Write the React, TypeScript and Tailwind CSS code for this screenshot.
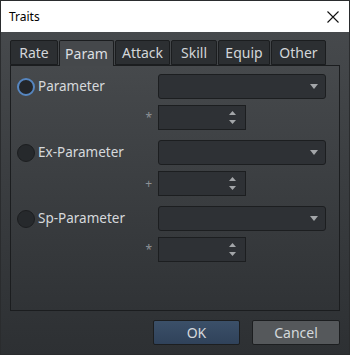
import React from 'react'

// =============================================
// Kleine Bausteine
// =============================================

const TABS = [
  { label: 'Rate', w: 'w-[48px]' },
  { label: 'Param', w: 'w-[55px]', active: true },
  { label: 'Attack', w: 'w-[55px]' },
  { label: 'Skill', w: 'w-[46px]' },
  { label: 'Equip', w: 'w-[52px]' },
  { label: 'Other', w: 'w-[55px]' },
]

function Tab({ label, w, active }: { label: string; w: string; active?: boolean }) {
  return (
    <div
      className={
        active
          ? `${w} h-[26px] -mb-px z-10 flex items-center justify-center border border-b-0 border-[#1b1d1f] bg-[#45484b] text-[#dcdfe2] text-[14px] rounded-t-[2px]`
          : `${w} h-[25px] flex items-center justify-center border border-[#1b1d1f] bg-[#2c2f32] text-[#d3d6d9] text-[14px] rounded-t-[2px]`
      }
    >
      {label}
    </div>
  )
}

function Radio({ focused }: { focused?: boolean }) {
  return (
    <span
      className={
        focused
          ? 'w-[18px] h-[18px] rounded-full border-2 border-[#5686c0] bg-[#23262a] shrink-0'
          : 'w-[18px] h-[18px] rounded-full border border-[#1c1e20] bg-[#26292c] shrink-0'
      }
    />
  )
}

function Combo() {
  return (
    <div className="w-[168px] h-[25px] rounded-[3px] border border-[#1c1e20] bg-[#2e3135] flex items-center justify-end pr-[7px]">
      <svg width="8" height="5" viewBox="0 0 8 5">
        <polygon points="0,0 8,0 4,5" fill="#a3a6a9" />
      </svg>
    </div>
  )
}

function Spin() {
  return (
    <div className="w-[88px] h-[25px] border border-[#1c1e20] bg-[#2e3135] flex flex-col items-end justify-center gap-[5px] pr-[9px]">
      <svg width="7" height="4" viewBox="0 0 7 4">
        <polygon points="0,4 7,4 3.5,0" fill="#a3a6a9" />
      </svg>
      <svg width="7" height="4" viewBox="0 0 7 4">
        <polygon points="0,0 7,0 3.5,4" fill="#a3a6a9" />
      </svg>
    </div>
  )
}

function ParamGroup({ label, op, focused }: { label: string; op: string; focused?: boolean }) {
  return (
    <div className="flex flex-col gap-[6px]">
      <div className="flex items-center">
        <div className="w-[141px] flex items-center gap-[3px]">
          <Radio focused={focused} />
          <span className="text-[13.5px] text-[#d6d9dc]">{label}</span>
        </div>
        <Combo />
      </div>
      <div className="flex items-center">
        <span className="w-[141px] pr-[6px] text-right text-[12px] text-[#8e9296]">{op}</span>
        <Spin />
      </div>
    </div>
  )
}

// =============================================
// App
// =============================================

export default function App() {
  return (
    <div
      className="w-[350px] h-[355px] flex flex-col border border-[#2a2c2e] overflow-hidden"
      style={{ fontFamily: '"Noto Sans", "Open Sans", sans-serif' }}
    >
      {/* Titelleiste */}
      <div className="h-[31px] bg-white flex items-center justify-between pl-[8px] pr-[10px] shrink-0">
        <span className="text-[12px] text-black">Traits</span>
        <svg width="12" height="12" viewBox="0 0 12 12">
          <path d="M0.5 0.5 L11.5 11.5 M11.5 0.5 L0.5 11.5" stroke="#111" strokeWidth="1.1" />
        </svg>
      </div>

      {/* Inhalt */}
      <div className="flex-1 flex flex-col px-[9px] bg-gradient-to-b from-[#46494c] to-[#2d3033]">
        <div className="flex items-end gap-px mt-[8px] pl-0">
          {TABS.map((t) => (
            <Tab key={t.label} {...t} />
          ))}
        </div>

        <div className="h-[246px] border border-[#1b1d1f] bg-gradient-to-b from-[#46494c] to-[#303336] pl-[6px] pt-[8px] flex flex-col gap-[10px]">
          <ParamGroup label="Parameter" op="*" focused />
          <ParamGroup label="Ex-Parameter" op="+" />
          <ParamGroup label="Sp-Parameter" op="*" />
        </div>

        <div className="flex justify-end gap-[12px] mt-[9px]">
          <button className="w-[87px] h-[25px] rounded-[2px] border border-[#1c1e20] bg-gradient-to-b from-[#3b5069] to-[#30425a] text-[14px] text-[#d4d8dc]">
            OK
          </button>
          <button className="w-[88px] h-[25px] rounded-[2px] border border-[#1c1e20] bg-[#55585b] text-[14px] text-[#d4d8dc]">
            Cancel
          </button>
        </div>
      </div>
    </div>
  )
}
